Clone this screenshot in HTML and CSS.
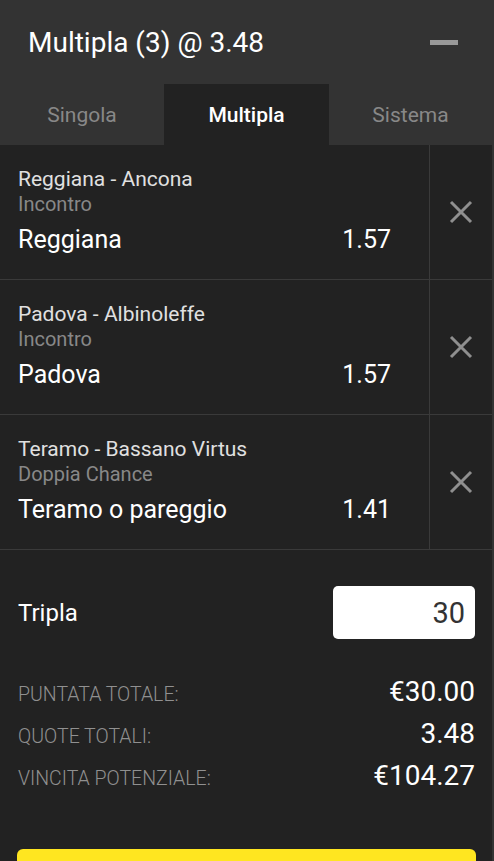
FILE: index.html
```html
<!DOCTYPE html>
<html>
<head>
    <title>Schedina - Multipla</title>
    <link rel="stylesheet" href="styles.css">
</head>
<body>
    <div class="betslip">
        <div class="slip-header">
            <h2>Multipla (3) @ 3.48</h2>
            <span class="minimize"></span>
        </div>

        <div class="tabs">
            <div class="tab">Singola</div>
            <div class="tab active">Multipla</div>
            <div class="tab">Sistema</div>
        </div>

        <div class="bet">
            <div class="bet-info">
                <div class="match">Reggiana - Ancona</div>
                <div class="market">Incontro</div>
                <div class="pick">
                    <span>Reggiana</span>
                    <span>1.57</span>
                </div>
            </div>
            <div class="remove">
                <svg width="24" height="24" viewBox="0 0 24 24"><path d="M2 2 L22 22 M22 2 L2 22" stroke="#8f8f8f" stroke-width="3"/></svg>
            </div>
        </div>

        <div class="bet">
            <div class="bet-info">
                <div class="match">Padova - Albinoleffe</div>
                <div class="market">Incontro</div>
                <div class="pick">
                    <span>Padova</span>
                    <span>1.57</span>
                </div>
            </div>
            <div class="remove">
                <svg width="24" height="24" viewBox="0 0 24 24"><path d="M2 2 L22 22 M22 2 L2 22" stroke="#8f8f8f" stroke-width="3"/></svg>
            </div>
        </div>

        <div class="bet">
            <div class="bet-info">
                <div class="match">Teramo - Bassano Virtus</div>
                <div class="market">Doppia Chance</div>
                <div class="pick">
                    <span>Teramo o pareggio</span>
                    <span>1.41</span>
                </div>
            </div>
            <div class="remove">
                <svg width="24" height="24" viewBox="0 0 24 24"><path d="M2 2 L22 22 M22 2 L2 22" stroke="#8f8f8f" stroke-width="3"/></svg>
            </div>
        </div>

        <div class="summary">
            <div class="stake-row">
                <label for="stake">Tripla</label>
                <input type="text" id="stake" value="30">
            </div>

            <div class="total-row">
                <span class="label">Puntata totale:</span>
                <span class="value">€30.00</span>
            </div>
            <div class="total-row">
                <span class="label">Quote totali:</span>
                <span class="value">3.48</span>
            </div>
            <div class="total-row">
                <span class="label">Vincita potenziale:</span>
                <span class="value">€104.27</span>
            </div>

            <button class="place-bet" aria-label="Scommetti"></button>
        </div>
    </div>
</body>
</html>
```

FILE: styles.css
```css
body {
    margin: 0;
    background-color: #222222;
    font-family: Roboto, "Liberation Sans", sans-serif;
    color: #ffffff;
}
.betslip {
    width: 492px;
    border-right: 2px solid #333333;
    min-height: 861px;
}
.slip-header {
    height: 84px;
    background: #333333;
    display: flex;
    align-items: center;
    justify-content: space-between;
    padding: 0 34px 0 28px;
}
.slip-header h2 {
    margin: 0;
    font-size: 28px;
    font-weight: 400;
}
.minimize {
    display: block;
    width: 28px;
    height: 5px;
    background: #999999;
}
.tabs {
    display: grid;
    grid-template-columns: 164px 165px 1fr;
    background: #333333;
    height: 61px;
}
.tab {
    display: flex;
    align-items: center;
    justify-content: center;
    font-size: 21px;
    color: #888888;
}
.tab.active {
    background: #222222;
    color: #ffffff;
    font-weight: 500;
}
.bet {
    display: grid;
    grid-template-columns: 430px 1fr;
    height: 134px;
    border-bottom: 1px solid #3a3a3a;
}
.bet-info {
    padding: 22px 38px 0 18px;
    border-right: 1px solid #3a3a3a;
}
.match {
    font-size: 21px;
    line-height: 24px;
    color: #e0e0e0;
}
.market {
    font-size: 20px;
    line-height: 26px;
    color: #888888;
}
.pick {
    display: flex;
    justify-content: space-between;
    margin-top: 9px;
    font-size: 25px;
    line-height: 28px;
}
.remove {
    display: flex;
    align-items: center;
    justify-content: center;
}
.summary {
    padding: 36px 17px 0 18px;
}
.stake-row {
    display: flex;
    align-items: center;
    justify-content: space-between;
    margin-bottom: 36px;
}
.stake-row label {
    font-size: 24px;
}
.stake-row input {
    width: 142px;
    height: 53px;
    box-sizing: border-box;
    border: none;
    border-radius: 5px;
    padding: 0 10px 0 0;
    text-align: right;
    font-family: Roboto, "Liberation Sans", sans-serif;
    font-size: 29px;
    color: #333333;
    background: #ffffff;
}
.total-row {
    display: flex;
    align-items: baseline;
    justify-content: space-between;
    height: 42px;
}
.total-row .label {
    font-size: 19.5px;
    font-weight: 300;
    text-transform: uppercase;
    color: #909090;
}
.total-row .value {
    font-size: 28px;
}
.place-bet {
    display: block;
    width: 459px;
    height: 56px;
    margin-top: 48px;
    margin-left: -1px;
    border: none;
    border-radius: 6px;
    background: #ffe620;
}
```
